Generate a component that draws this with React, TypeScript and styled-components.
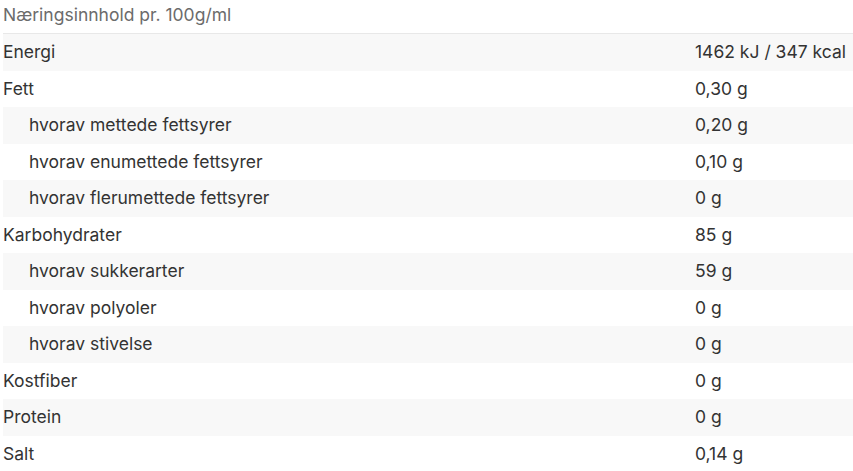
import React from "react";
import styled, { createGlobalStyle } from "styled-components";

const Global = createGlobalStyle`
  html, body { margin: 0; padding: 0; background: #ffffff; }
  body { font-family: Inter, "Noto Sans", sans-serif; -webkit-font-smoothing: antialiased; }
`;

const Wrapper = styled.section`
  padding-left: 3px;
  width: 850px;
  overflow: hidden;
`;

const Caption = styled.div`
  font-size: 17.5px;
  line-height: 24px;
  color: #6b6b6b;
  padding: 3px 0 6px 0;
  border-bottom: 1px solid #e8e8e8;
`;

const Table = styled.div`
  display: flex;
  flex-direction: column;
`;

const Row = styled.div<{ $shaded: boolean }>`
  display: grid;
  grid-template-columns: 692px 1fr;
  background: ${(p) => (p.$shaded ? "#f8f8f8" : "#ffffff")};
  font-size: 17.5px;
  line-height: 24px;
  color: #333333;
  padding: 6.25px 0;
`;

const Label = styled.div<{ $sub: boolean }>`
  padding-left: ${(p) => (p.$sub ? "26px" : "0")};
  white-space: nowrap;
`;

const Value = styled.div`
  white-space: nowrap;
`;

const rows: { label: string; value: string; sub?: boolean }[] = [
  { label: "Energi", value: "1462 kJ / 347 kcal" },
  { label: "Fett", value: "0,30 g" },
  { label: "hvorav mettede fettsyrer", value: "0,20 g", sub: true },
  { label: "hvorav enumettede fettsyrer", value: "0,10 g", sub: true },
  { label: "hvorav flerumettede fettsyrer", value: "0 g", sub: true },
  { label: "Karbohydrater", value: "85 g" },
  { label: "hvorav sukkerarter", value: "59 g", sub: true },
  { label: "hvorav polyoler", value: "0 g", sub: true },
  { label: "hvorav stivelse", value: "0 g", sub: true },
  { label: "Kostfiber", value: "0 g" },
  { label: "Protein", value: "0 g" },
  { label: "Salt", value: "0,14 g" },
];

export default function App() {
  return (
    <>
      <Global />
      <Wrapper>
        <Caption>Næringsinnhold pr. 100g/ml</Caption>
        <Table>
          {rows.map((r, i) => (
            <Row key={r.label} $shaded={i % 2 === 0}>
              <Label $sub={!!r.sub}>{r.label}</Label>
              <Value>{r.value}</Value>
            </Row>
          ))}
        </Table>
      </Wrapper>
    </>
  );
}
